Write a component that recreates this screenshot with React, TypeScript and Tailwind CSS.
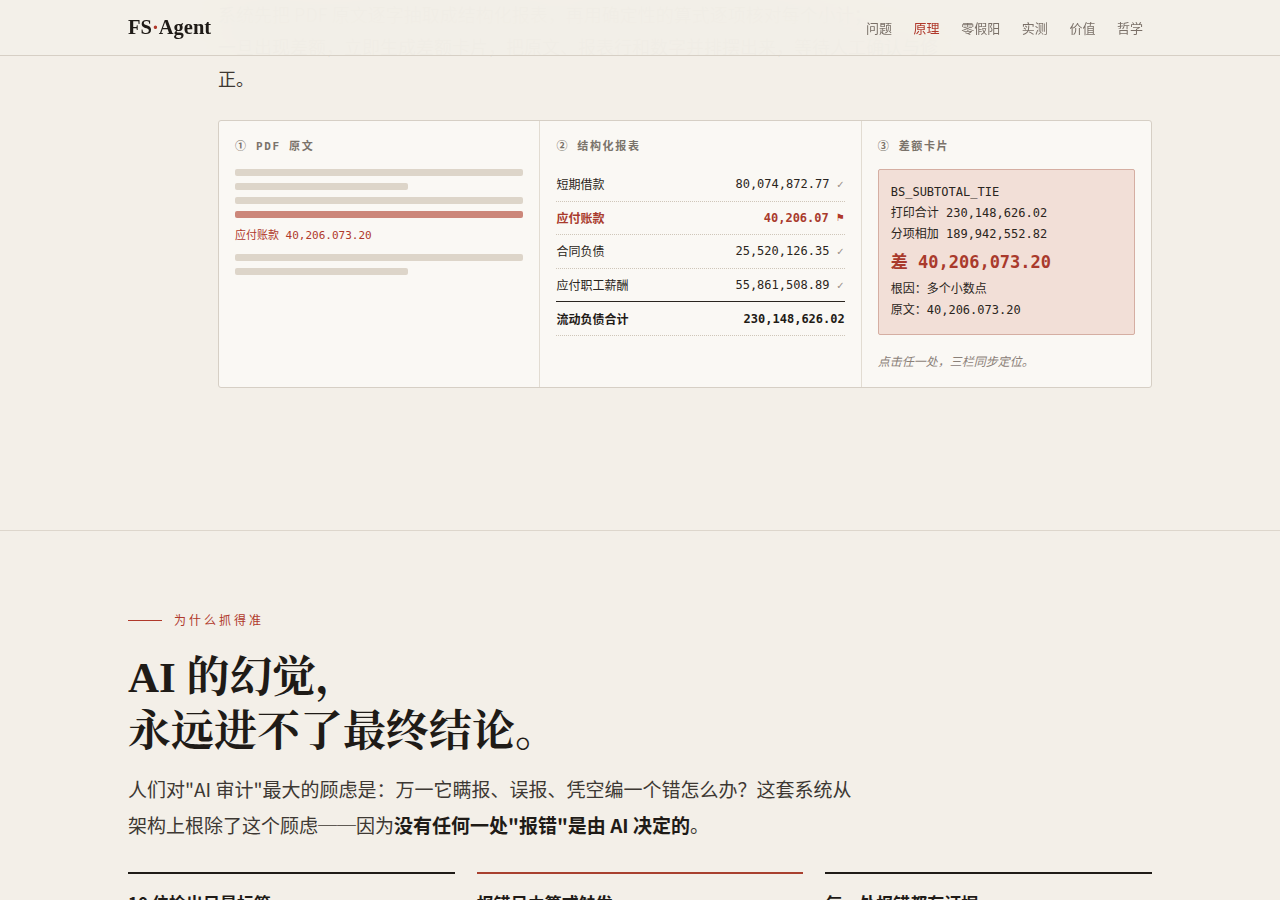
import React from "react";

const SANS = "font-['Noto_Sans_CJK_SC','Noto_Sans',sans-serif]";
const MONO = "font-['DejaVu_Sans_Mono','Noto_Sans_CJK_SC',monospace]";
const SERIF = "font-['Liberation_Serif','Noto_Serif_CJK_SC','Noto_Sans_CJK_SC',serif]";

const NAV = ["问题", "原理", "零假阳", "实测", "价值", "哲学"];

// 报表行
const ROWS = [
  { name: "短期借款", value: "80,074,872.77", flag: false },
  { name: "应付账款", value: "40,206.07", flag: true },
  { name: "合同负债", value: "25,520,126.35", flag: false },
  { name: "应付职工薪酬", value: "55,861,508.89", flag: false },
];

function ColTitle({ children }: { children: React.ReactNode }) {
  return (
    <div className={`${MONO} text-[11px] leading-4 font-bold tracking-[0.15em] text-[#7a736b] mb-[14px]`}>{children}</div>
  );
}

function Bar({ short, red }: { short?: boolean; red?: boolean }) {
  return (
    <div className={`h-[7px] rounded-[2px] ${red ? "bg-[#cc877a]" : "bg-[#ddd5c9]"} ${short ? "w-[60%]" : "w-full"}`} />
  );
}

function Header() {
  return (
    <header className="fixed top-0 inset-x-0 z-10 h-[56px] border-b border-[#d6cfc5] bg-[#f3efe8]/[0.97] backdrop-blur-xl">
      <div className="max-w-[1024px] mx-auto h-full flex items-center justify-between">
        <div className={`${SERIF} text-[20.5px] font-bold text-[#1f1b17]`}>
          FS<span className="text-[#b0392b]">·</span>Agent
        </div>
        <nav className={`${SANS} flex items-center gap-[21.6px] pr-[9px] text-[13px]`}>
          {NAV.map((n) => (
            <span key={n} className={n === "原理" ? "text-[#b0392b]" : "text-[#7a7068]"}>
              {n}
            </span>
          ))}
        </nav>
      </div>
    </header>
  );
}

function TriPanel() {
  return (
    <div className="ml-[90px] mt-[26px] grid grid-cols-[1fr_1fr_0.9fr] border border-[#d6cfc5] rounded-[3px] bg-[#faf8f4] h-[268px]">
      {/* ① PDF 原文 */}
      <div className="px-4 pt-[18px] border-r border-[#e2dcd2]">
        <ColTitle>① PDF 原文</ColTitle>
        <div className="flex flex-col gap-[7px]">
          <Bar />
          <Bar short />
          <Bar />
          <Bar red />
        </div>
        <div className={`${MONO} mt-[10px] text-[11px] leading-4 text-[#b0392b]`}>应付账款 40,206.073.20</div>
        <div className="flex flex-col gap-[7px] mt-[10px]">
          <Bar />
          <Bar short />
        </div>
      </div>

      {/* ② 结构化报表 */}
      <div className="px-4 pt-[18px] border-r border-[#e2dcd2]">
        <ColTitle>② 结构化报表</ColTitle>
        <div className="-mt-[1px]">
          {ROWS.map((r, i) => (
            <div
              key={r.name}
              className={`h-[33.6px] flex items-center justify-between ${
                i === ROWS.length - 1 ? "border-b border-[#2a2520]" : "border-b border-dotted border-[#cfc6b9]"
              }`}>
              <span className={`${SANS} text-[12px] ${r.flag ? "text-[#a93a2c] font-bold" : "text-[#2a2520]"}`}>
                {r.name}
              </span>
              <span className="flex items-center gap-[7px]">
                <span className={`${MONO} text-[12px] ${r.flag ? "text-[#a93a2c] font-bold" : "text-[#2a2520]"}`}>
                  {r.value}
                </span>
                {r.flag ? (
                  <span className="text-[10px] text-[#b0392b] font-['DejaVu_Sans']">⚑</span>
                ) : (
                  <span className="text-[10px] text-[#9a9088] font-['DejaVu_Sans']">✓</span>
                )}
              </span>
            </div>
          ))}
          <div className="h-[33.6px] flex items-center justify-between border-b border-dotted border-[#cfc6b9]">
            <span className={`${SANS} text-[12px] font-bold text-[#1f1b17]`}>流动负债合计</span>
            <span className={`${MONO} text-[12px] font-bold text-[#1f1b17]`}>230,148,626.02</span>
          </div>
        </div>
      </div>

      {/* ③ 差额卡片 */}
      <div className="px-4 pt-[18px]">
        <ColTitle>③ 差额卡片</ColTitle>
        <div className={`${MONO} border border-[#d5aea2] bg-[#f2dfd7] rounded-[2px] px-3 pt-[12px] pb-[13px] text-[12px] leading-[21px] text-[#2a2520]`}>
          <div>BS_SUBTOTAL_TIE</div>
          <div>打印合计 230,148,626.02</div>
          <div>分项相加 189,942,552.82</div>
          <div className="text-[17px] leading-[34px] font-bold text-[#a93a2c]">差 40,206,073.20</div>
          <div>根因：多个小数点</div>
          <div>原文：40,206.073.20</div>
        </div>
        <div className={`${SANS} mt-[17px] text-[12px] italic text-[#8a8078]`}>点击任一处，三栏同步定位。</div>
      </div>
    </div>
  );
}

const POINTS = [
  { title: "10 位检出只是标签", color: "border-[#1f1b17]" },
  { title: "报错只由算式触发", color: "border-[#a8402f]" },
  { title: "每一处报错都有证据", color: "border-[#1f1b17]" },
];

export default function App() {
  return (
    <div className={`${SANS} min-h-screen bg-[#f3efe8] text-[#2a2520] overflow-hidden`}>
      <Header />

      {/* 上一节：原理 */}
      <section className="max-w-[1024px] mx-auto pb-[142px]">
        <p className="ml-[90px] -mt-[2px] text-[18px] leading-[32px] text-[#3d3833] whitespace-nowrap">
          系统先把 PDF 原文逐字抽取成结构化报表，再用确定性的算式逐项核对每个小计；
          <br />
          一旦出现差额，立即生成差额卡片，把原文、报表行和数字并排摆出来，等待人工确认与修
          <br />
          正。
        </p>
        <TriPanel />
      </section>

      {/* 为什么抓得准 */}
      <section className="border-t border-[#ddd6cc]">
        <div className="max-w-[1024px] mx-auto pt-[81px]">
          <div className="flex items-center gap-3">
            <span className="w-[34px] h-px bg-[#b0392b]" />
            <span className="text-[12px] leading-4 tracking-[0.25em] text-[#b0392b]">为什么抓得准</span>
          </div>
          <h2 className={`${SERIF} mt-[23px] text-[43px] leading-[54px] font-bold text-[#1f1b17]`}>
            AI 的幻觉，
            <br />
            永远进不了最终结论。
          </h2>
          <p className="mt-[12px] max-w-[730px] text-[19px] leading-[36px] text-[#3d3833]">
            人们对"AI 审计"最大的顾虑是：万一它瞒报、误报、凭空编一个错怎么办？这套系统从架构上根除了这个顾虑──因为
            <b className="text-[#1f1b17]">没有任何一处"报错"是由 AI 决定的</b>。
          </p>
          <div className="mt-[29px] grid grid-cols-3 gap-[22px]">
            {POINTS.map((p) => (
              <div key={p.title} className={`border-t-2 ${p.color} pt-[16px]`}>
                <div className="text-[17px] font-bold text-[#1f1b17]">{p.title}</div>
                <div className="mt-2 text-[14px] leading-6 text-[#4a4540]">
                  每一条结论都能回溯到原文位置与算式，人工可以逐一复核。
                </div>
              </div>
            ))}
          </div>
        </div>
      </section>
    </div>
  );
}
